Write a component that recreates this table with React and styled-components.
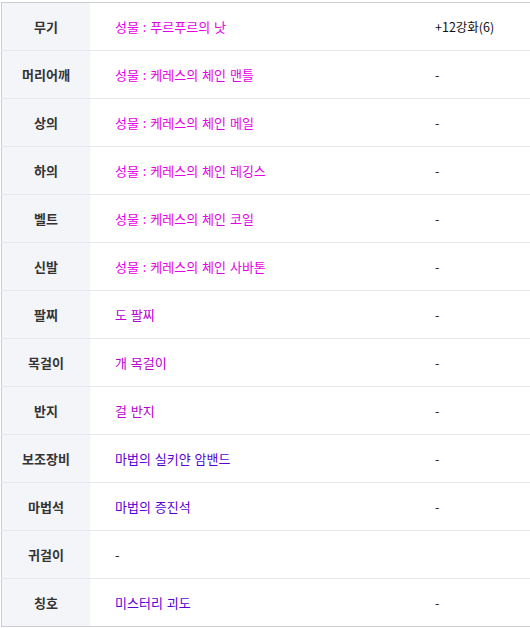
import React from 'react'
import styled, { createGlobalStyle } from 'styled-components'

const GlobalStyle = createGlobalStyle`
    html, body {
        margin: 0;
        padding: 0;
        overflow: hidden;
        background: #fff;
    }
    body {
        font-family: "Noto Sans CJK KR", "Noto Sans", sans-serif;
    }
`

const GRADE = {
    epic: '#e600e6',
    unique: '#b800d0',
    rare: '#5a00d4',
    none: '#222',
}

const items = [
    { slot: '무기', name: '성물 : 푸르푸르의 낫', grade: 'epic', extra: '+12강화(6)' },
    { slot: '머리어깨', name: '성물 : 케레스의 체인 맨틀', grade: 'epic', extra: '-' },
    { slot: '상의', name: '성물 : 케레스의 체인 메일', grade: 'epic', extra: '-' },
    { slot: '하의', name: '성물 : 케레스의 체인 레깅스', grade: 'epic', extra: '-' },
    { slot: '벨트', name: '성물 : 케레스의 체인 코일', grade: 'epic', extra: '-' },
    { slot: '신발', name: '성물 : 케레스의 체인 사바톤', grade: 'epic', extra: '-' },
    { slot: '팔찌', name: '도 팔찌', grade: 'unique', extra: '-' },
    { slot: '목걸이', name: '개 목걸이', grade: 'unique', extra: '-' },
    { slot: '반지', name: '걸 반지', grade: 'unique', extra: '-' },
    { slot: '보조장비', name: '마법의 실키얀 암밴드', grade: 'rare', extra: '-' },
    { slot: '마법석', name: '마법의 증진석', grade: 'rare', extra: '-' },
    { slot: '귀걸이', name: '-', grade: 'none', extra: '' },
    { slot: '칭호', name: '미스터리 괴도', grade: 'rare', extra: '-' },
]

const App = () => {
    return (
        <>
            <GlobalStyle />
            <Wrapper>
                <Table>
                    <tbody>
                        {items.map(item => (
                            <Row key={item.slot}>
                                <Slot>{item.slot}</Slot>
                                <Name grade={item.grade}>{item.name}</Name>
                                <Extra>{item.extra}</Extra>
                            </Row>
                        ))}
                    </tbody>
                </Table>
            </Wrapper>
        </>
    )
}

export default App

const Wrapper = styled.div`
    padding: 2px 0 0 1px;
    width: 545px;
`

const Table = styled.table`
    width: 100%;
    border-collapse: collapse;
    border: 1px solid #cdcdd5;
    table-layout: fixed;
`

const Row = styled.tr`
    height: 48px;
    & + & > td {
        border-top: 1px solid #e6e6ec;
    }
`

const Slot = styled.td`
    width: 88px;
    padding: 0;
    background: #f4f5f9;
    text-align: center;
    font-size: 13px;
    font-weight: 700;
    color: #333;
`

const Name = styled.td`
    width: 295px;
    padding: 0 0 0 25px;
    font-size: 13px;
    word-spacing: 1px;
    color: ${({ grade }) => GRADE[grade]};
`

const Extra = styled.td`
    padding: 0 0 0 25px;
    font-size: 12.5px;
    color: #111;
`
